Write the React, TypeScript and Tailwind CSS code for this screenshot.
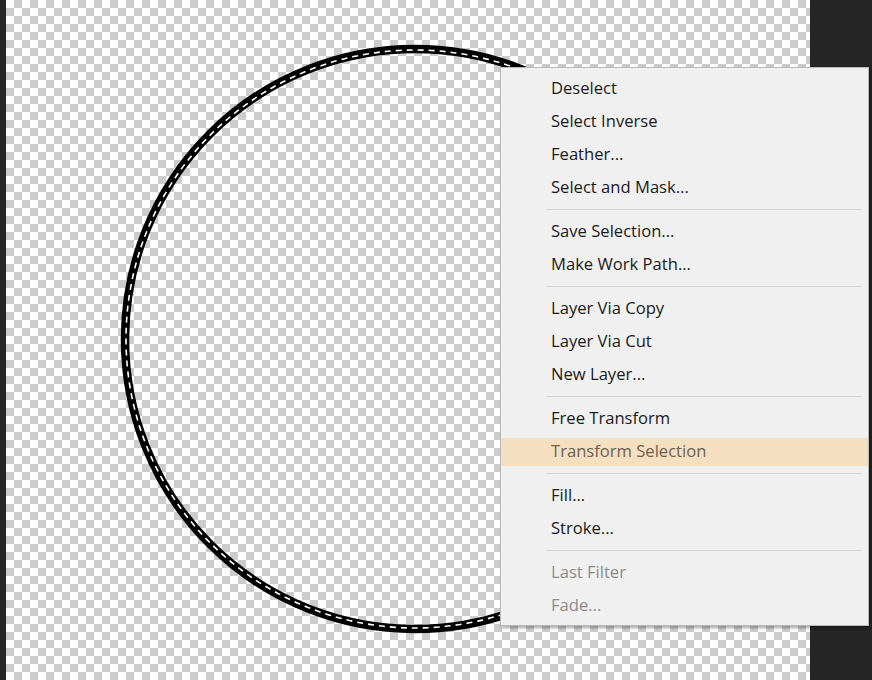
import React from "react";

type Item = { label: string; kind?: "normal" | "active" | "disabled" } | "sep";

const items: Item[] = [
  { label: "Deselect" },
  { label: "Select Inverse" },
  { label: "Feather..." },
  { label: "Select and Mask..." },
  "sep",
  { label: "Save Selection..." },
  { label: "Make Work Path..." },
  "sep",
  { label: "Layer Via Copy" },
  { label: "Layer Via Cut" },
  { label: "New Layer..." },
  "sep",
  { label: "Free Transform" },
  { label: "Transform Selection", kind: "active" },
  "sep",
  { label: "Fill..." },
  { label: "Stroke..." },
  "sep",
  { label: "Last Filter", kind: "disabled" },
  { label: "Fade...", kind: "disabled" },
];

const SelectionRing = () => (
  <svg className="absolute left-0 top-0" width="804" height="680" viewBox="0 0 804 680">
    <circle cx="409" cy="339" r="290" fill="none" stroke="#000" strokeWidth="8.5" />
    <circle cx="409" cy="339" r="289" fill="none" stroke="#fff" strokeWidth="1.6" strokeDasharray="6 5" />
  </svg>
);

const ContextMenu = () => (
  <div className="absolute left-[500px] top-[67px] w-[369px] border border-[#b9b9b9] bg-[#f0f0f0] pt-[4px] pb-[3px] shadow-[2px_2px_3px_rgba(0,0,0,0.35)]">
    {items.map((it, i) =>
      it === "sep" ? (
        <div key={i} className="flex h-[11px] items-center pl-[45px] pr-[6px]">
          <div className="h-px w-full bg-[#d5d5d5]" />
        </div>
      ) : (
        <div key={i} className="flex h-[33px] items-center">
          <div
            className={
              it.kind === "active"
                ? "flex h-[28px] w-full items-center bg-[#f4dfc0] pl-[50px] pb-px text-[#6e5f4e]"
                : it.kind === "disabled"
                ? "flex h-[28px] w-full items-center pl-[50px] pb-px text-[#8c8c8c]"
                : "flex h-[28px] w-full items-center pl-[50px] pb-px text-[#1b1b1b]"
            }
          >
            {it.label}
          </div>
        </div>
      )
    )}
  </div>
);

export default function App() {
  return (
    <div className="relative flex h-[680px] w-[872px] overflow-hidden bg-[#262626] font-['Open_Sans',sans-serif] text-[16.6px]">
      <div className="w-[6px] shrink-0" />
      <div className="relative h-full w-[804px] shrink-0 bg-[repeating-conic-gradient(#cccccc_0%_25%,#ffffff_0%_50%)] bg-[length:16px_16px]">
        <SelectionRing />
      </div>
      <div className="flex-1 bg-[#252525]" />
      <ContextMenu />
    </div>
  );
}
